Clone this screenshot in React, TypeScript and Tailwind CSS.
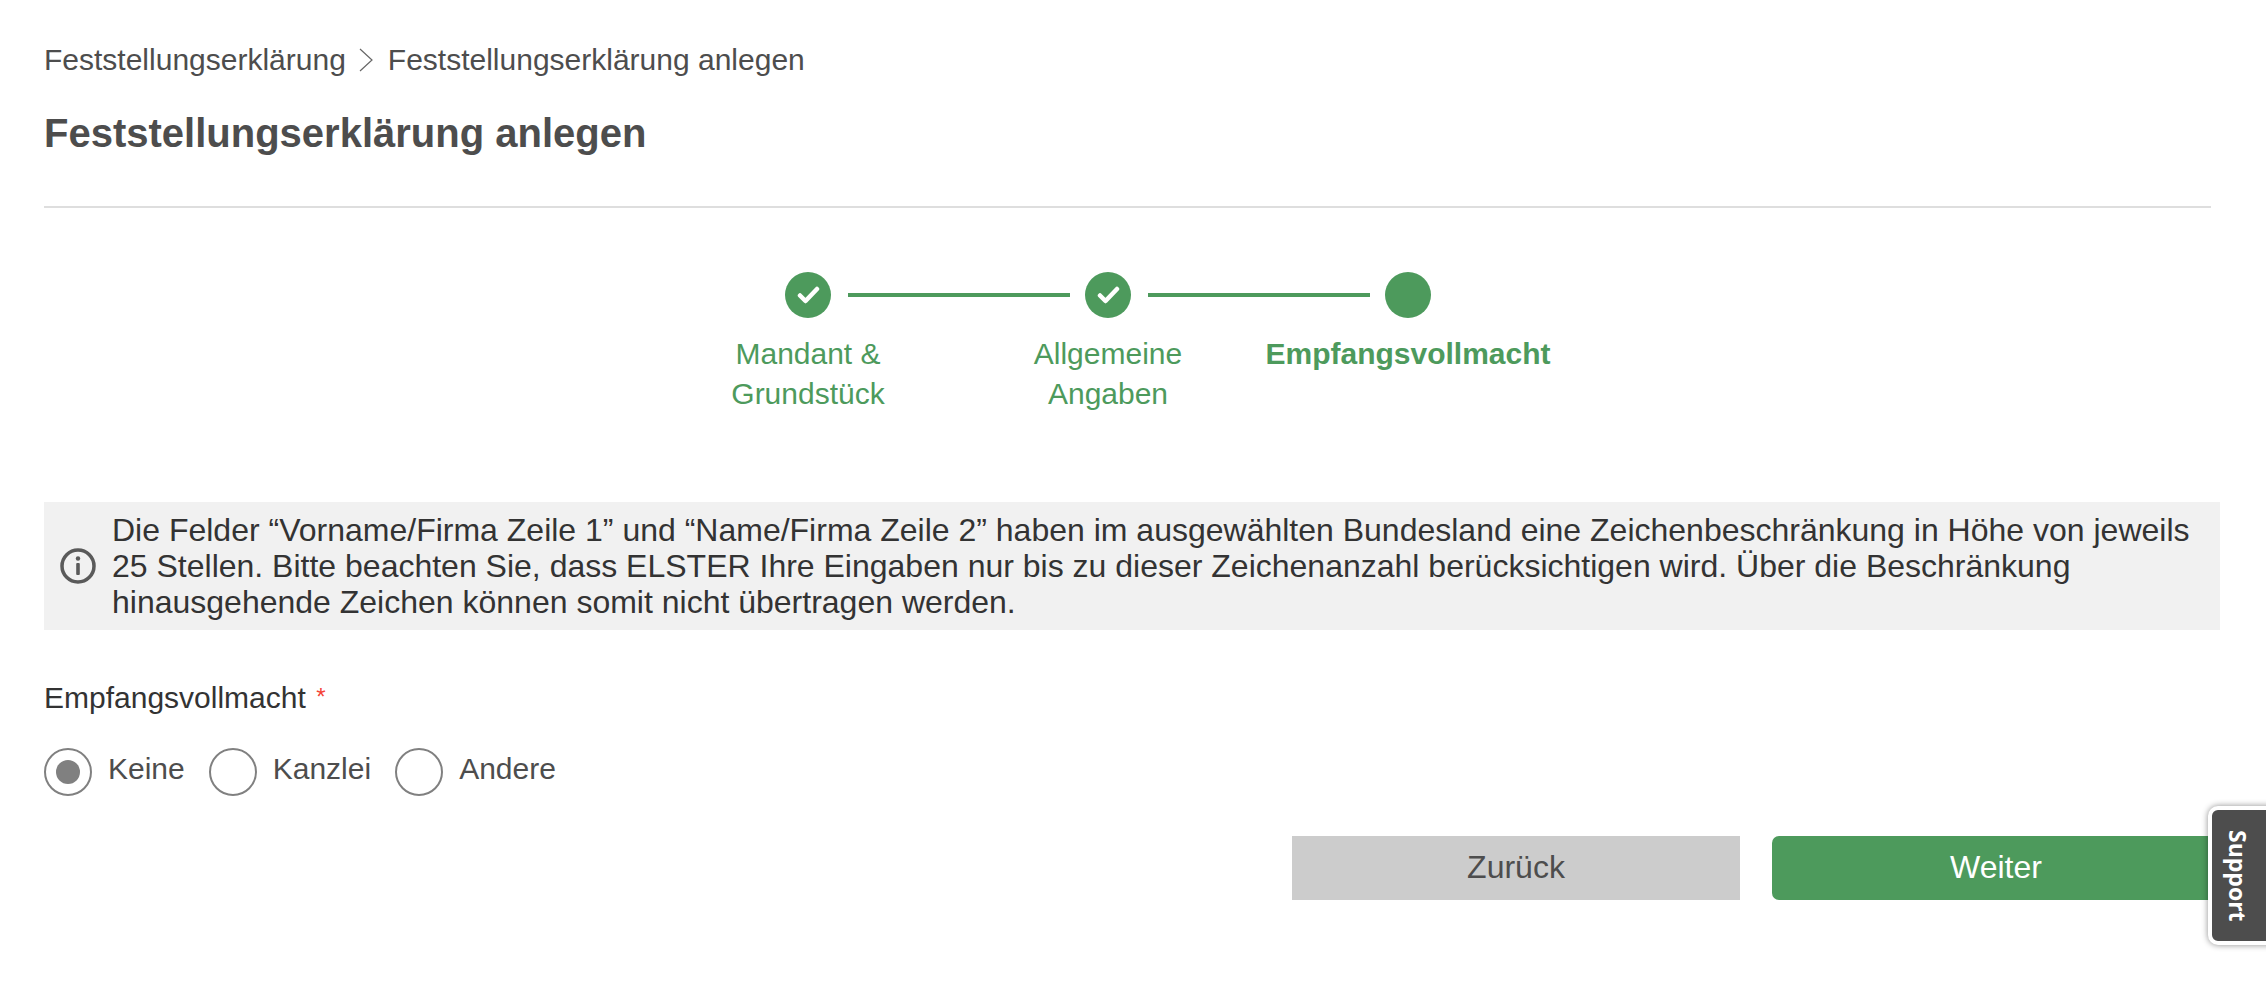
import React from 'react';

const GREEN = 'bg-[#4d9a5c]';

function Check() {
  return (
    <svg viewBox="0 0 23 18" className="w-[23px] h-[18px]" fill="none" stroke="#fff" strokeWidth="4.5" strokeLinecap="round" strokeLinejoin="round">
      <path d="M3 9.5L8.5 15L20 3" />
    </svg>
  );
}

function StepDot({ done }: { done?: boolean }) {
  return (
    <div className={`w-[46px] h-[46px] rounded-full ${GREEN} flex items-center justify-center shrink-0`}>
      {done && <Check />}
    </div>
  );
}

function Line() {
  return <div className={`w-[222px] h-[4px] ml-[17px] mr-[15px] shrink-0 ${GREEN}`} />;
}

function Radio({ label, checked }: { label: string; checked?: boolean }) {
  return (
    <label className="flex items-center">
      <span className="w-[48px] h-[48px] rounded-full border-2 border-[#808080] flex items-center justify-center">
        {checked && <span className="w-[24px] h-[24px] rounded-full bg-[#808080]" />}
      </span>
      <span className="ml-[16px] text-[30px] leading-[36px] text-[#4d4d4d] -mt-[6px]">{label}</span>
    </label>
  );
}

export default function App() {
  return (
    <div className="relative h-[992px] overflow-hidden bg-white pl-[44px] pr-[46px] font-['Liberation_Sans',Arial,sans-serif]">
      <nav className="pt-[42px] flex items-center h-[78px] text-[30px] leading-[36px] text-[#4d4d4d]">
        <span>Feststellungserklärung</span>
        <svg viewBox="0 0 14 24" className="w-[14px] h-[24px] ml-[13px] mr-[15px]" fill="none" stroke="#666" strokeWidth="1.2">
          <path d="M1 1l12 11L1 23" />
        </svg>
        <span>Feststellungserklärung anlegen</span>
      </nav>
      <h1 className="mt-[31px] text-[40px] leading-[48px] font-bold text-[#4d4d4d]">Feststellungserklärung anlegen</h1>
      <hr className="mt-[49px] mr-[9px] border-0 h-[2px] bg-[#dedede]" />

      <div className="mt-[64px] ml-[741px] flex items-center">
        <StepDot done />
        <Line />
        <StepDot done />
        <Line />
        <StepDot />
      </div>
      <div className="mt-[16px] ml-[614px] w-[900px] grid grid-cols-3 text-center text-[30px] leading-[40px] text-[#4d9a5c]">
        <div>Mandant &<br />Grundstück</div>
        <div>Allgemeine<br />Angaben</div>
        <div className="font-bold">Empfangsvollmacht</div>
      </div>

      <div className="mt-[88px] h-[128px] bg-[#f1f1f1] flex items-center">
        <svg viewBox="0 0 36 36" className="w-[36px] h-[36px] ml-[16px] mr-[16px] shrink-0" fill="none">
          <circle cx="18" cy="18" r="16" stroke="#5a5a5a" strokeWidth="3.5" />
          <circle cx="18" cy="10.5" r="2.2" fill="#5a5a5a" />
          <rect x="16.2" y="15" width="3.6" height="12" rx="1" fill="#5a5a5a" />
        </svg>
        <p className="text-[32px] leading-[36px] text-[#333] pr-[14px]">
          Die Felder “Vorname/Firma Zeile 1” und “Name/Firma Zeile 2” haben im ausgewählten Bundesland eine Zeichenbeschränkung in Höhe von jeweils 25 Stellen. Bitte beachten Sie, dass ELSTER Ihre Eingaben nur bis zu dieser Zeichenanzahl berücksichtigen wird. Über die Beschränkung hinausgehende Zeichen können somit nicht übertragen werden.
        </p>
      </div>

      <div className="mt-[50px] text-[30px] leading-[36px] text-[#333]">
        Empfangsvollmacht <span className="ml-[2px] text-[24px] leading-none align-[3px] text-[#f44336]">*</span>
      </div>
      <div className="mt-[32px] flex gap-[24px]">
        <Radio label="Keine" checked />
        <Radio label="Kanzlei" />
        <Radio label="Andere" />
      </div>

      <div className="mt-[40px] flex justify-end gap-[32px]">
        <button className="w-[448px] h-[64px] pb-[2px] bg-[#cccccc] text-[32px] text-[#4d4d4d]">Zurück</button>
        <button className={`w-[448px] h-[64px] pb-[2px] rounded-[7px] ${GREEN} text-[32px] text-white`}>Weiter</button>
      </div>

      <div className="absolute left-[2208px] top-[806px] w-[70px] h-[139px] bg-[#4d4d4d] border-4 border-white rounded-l-[10px] shadow-[0_0_6px_rgba(0,0,0,0.45)] flex items-center pl-[12px]">
        <span className="[writing-mode:vertical-rl] text-[23px] leading-[28px] font-bold text-white font-['Open_Sans',sans-serif]">Support</span>
      </div>
    </div>
  );
}
